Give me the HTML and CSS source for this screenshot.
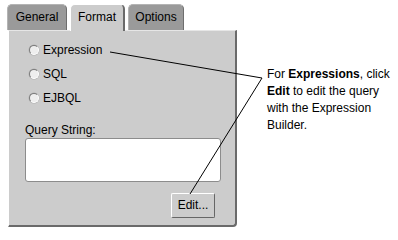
FILE: index.html
```html
<!DOCTYPE html>
<html>
<head>
<meta charset="utf-8">
<link rel="stylesheet" href="styles.css">
</head>
<body>
<div class="page">
  <div class="widget">
    <div class="tabrow">
      <div class="tab tab-general">General</div>
      <div class="tab tab-format selected">Format</div>
      <div class="tab tab-options">Options</div>
    </div>
    <div class="panel">
      <div class="radios">
        <div class="radio-row"><span class="radio"></span><span>Expression</span></div>
        <div class="radio-row"><span class="radio"></span><span>SQL</span></div>
        <div class="radio-row"><span class="radio"></span><span>EJBQL</span></div>
      </div>
      <div class="qlabel">Query String:</div>
      <div class="qbox"></div>
      <div class="btnrow"><div class="btn">Edit...</div></div>
    </div>
  </div>
  <div class="callout">
    <div>For <b>Expressions</b>, click</div>
    <div><b>Edit</b> to edit the query</div>
    <div>with the Expression</div>
    <div>Builder.</div>
  </div>
</div>
<svg class="lines" width="398" height="232" viewBox="0 0 398 232">
  <polyline points="110,52 262,78 190,194" fill="none" stroke="#000" stroke-width="1"/>
</svg>
</body>
</html>
```

FILE: styles.css
```css
html, body {
  margin: 0;
  padding: 0;
  background: #fff;
}
body {
  width: 398px;
  height: 232px;
  position: relative;
  overflow: hidden;
  font-family: "Liberation Sans", Arial, sans-serif;
  font-size: 12px;
  color: #000;
}
.page {
  display: flex;
  align-items: flex-start;
}
.widget {
  margin: 4px 0 0 7px;
  width: 230px;
}
.tabrow {
  display: flex;
  height: 26px;
}
.tab {
  box-sizing: border-box;
  height: 26px;
  line-height: 25px;
  text-align: center;
  border-radius: 5px 5px 0 0;
  background: #9a9a9a;
  border-top: 1px solid #b4b4b4;
  border-left: 1px solid #b4b4b4;
  border-right: 1px solid #6e6e6e;
}
.tab-general { width: 60px; }
.tab-format { width: 55px; margin-left: 3px; }
.tab-options { width: 56px; margin-left: 3px; }
.tab.selected {
  background: #cccccc;
  border-top: 1px solid #ffffff;
  border-left: 1px solid #ffffff;
  border-right: 2px solid #6a6a6a;
  height: 27px;
  position: relative;
  z-index: 1;
}
.panel {
  box-sizing: border-box;
  margin-left: 1px;
  width: 229px;
  height: 197px;
  background: #cccccc;
  border-top: 1px solid #e6e6e6;
  border-left: 1px solid #ffffff;
  border-right: 2px solid #6a6a6a;
  border-bottom: 2px solid #6a6a6a;
  border-bottom-right-radius: 4px;
  padding: 7px 0 0 16px;
}
.radios {
  margin-left: 4px;
}
.radio-row {
  height: 24px;
  display: flex;
  align-items: center;
}
.radio {
  box-sizing: border-box;
  width: 10px;
  height: 10px;
  border-radius: 50%;
  background: #eeeeee;
  border: 1px solid;
  border-color: #7a7a7a #ffffff #ffffff #7a7a7a;
  box-shadow: 0 0 0 0.5px #b0b0b0;
  margin-right: 4px;
}
.qlabel {
  margin-top: 12px;
  height: 16px;
  line-height: 16px;
}
.qbox {
  box-sizing: border-box;
  width: 196px;
  height: 44px;
  background: #ffffff;
  border: 1px solid #8c8c8c;
  border-radius: 3px;
}
.btnrow {
  width: 190px;
  display: flex;
  justify-content: flex-end;
  margin-top: 11px;
}
.btn {
  box-sizing: border-box;
  width: 44px;
  height: 25px;
  line-height: 22px;
  text-align: center;
  background: #cccccc;
  border: 1px solid;
  border-color: #ffffff #666666 #666666 #ffffff;
  border-radius: 2px;
}
.callout {
  margin: 66px 0 0 30px;
  line-height: 17px;
  white-space: nowrap;
}
.lines {
  position: absolute;
  left: 0;
  top: 0;
  pointer-events: none;
}
```
